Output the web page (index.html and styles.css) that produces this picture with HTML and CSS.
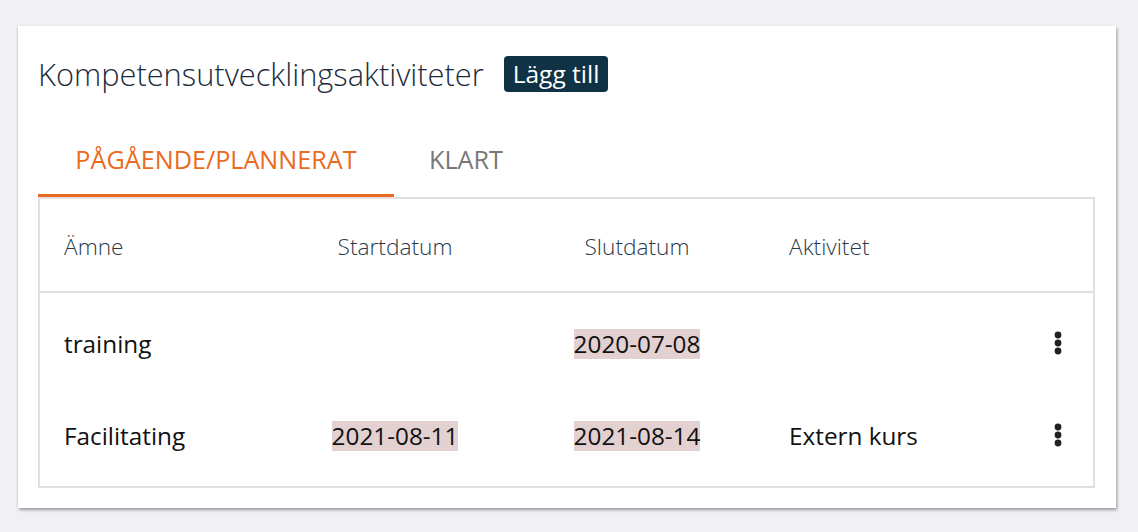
FILE: index.html
```html
<!DOCTYPE html>
<html lang="sv">
<head>
<meta charset="utf-8">
<title>Kompetensutvecklingsaktiviteter</title>
<link rel="stylesheet" href="styles.css">
</head>
<body>
<section class="card">
  <header class="card-head">
    <h2 class="title">Kompetensutvecklingsaktiviteter</h2>
    <button class="btn-add">Lägg till</button>
  </header>
  <nav class="tabs">
    <div class="tab active">PÅGÅENDE/PLANNERAT</div>
    <div class="tab">KLART</div>
  </nav>
  <div class="table">
    <div class="row head">
      <div class="cell c-subject">Ämne</div>
      <div class="cell c-start">Startdatum</div>
      <div class="cell c-end">Slutdatum</div>
      <div class="cell c-act">Aktivitet</div>
      <div class="cell c-menu"></div>
    </div>
    <div class="body">
      <div class="row">
        <div class="cell c-subject">training</div>
        <div class="cell c-start"></div>
        <div class="cell c-end"><span class="date">2020-07-08</span></div>
        <div class="cell c-act"></div>
        <div class="cell c-menu"><svg class="kebab" viewBox="0 0 8 24" width="8" height="24"><circle cx="4" cy="4" r="3.4"/><circle cx="4" cy="12" r="3.4"/><circle cx="4" cy="20" r="3.4"/></svg></div>
      </div>
      <div class="row">
        <div class="cell c-subject">Facilitating</div>
        <div class="cell c-start"><span class="date">2021-08-11</span></div>
        <div class="cell c-end"><span class="date">2021-08-14</span></div>
        <div class="cell c-act">Extern kurs</div>
        <div class="cell c-menu"><svg class="kebab" viewBox="0 0 8 24" width="8" height="24"><circle cx="4" cy="4" r="3.4"/><circle cx="4" cy="12" r="3.4"/><circle cx="4" cy="20" r="3.4"/></svg></div>
      </div>
    </div>
  </div>
</section>
</body>
</html>
```

FILE: styles.css
```css
* { box-sizing: border-box; }
html, body { margin: 0; padding: 0; }
body {
  background: #f0f0f5;
  font-family: "Open Sans", "Noto Sans", sans-serif;
  font-weight: 300;
  padding: 26px 22px 24px 18px;
}
.card {
  width: 1098px;
  height: 482px;
  background: #fff;
  box-shadow: 1px 2px 3px rgba(0,0,0,0.35), -1px 0 2px rgba(0,0,0,0.06);
  padding: 30px 21px 21px 20px;
}
.card-head {
  display: flex;
  align-items: center;
  gap: 20px;
  height: 36px;
}
.title {
  margin: 0;
  font-weight: 300;
  font-size: 30.8px;
  color: #1c2c3c;
}
.btn-add {
  height: 36px;
  padding: 0 9px;
  border: 0;
  border-radius: 4px;
  background: #0f3245;
  color: #fff;
  font-family: inherit;
  font-weight: 400;
  font-size: 24.5px;
  line-height: 36px;
}
.tabs {
  display: flex;
  margin-top: 33px;
  height: 72px;
}
.tab {
  display: flex;
  align-items: center;
  justify-content: center;
  padding: 0 0 2px;
  font-size: 25.2px;
  font-weight: 400;
  color: #777;
  border-bottom: 3px solid transparent;
}
.tab.active {
  color: #ea6a20;
  border-bottom-color: #ea6a20;
  width: 356px;
}
.tab:not(.active) { width: 144px; }
.table {
  border: 2px solid #e0e0e0;
  height: 291px;
}
.row {
  display: grid;
  grid-template-columns: 265px 180px 304px 1fr 70px;
  align-items: center;
  height: 92px;
}
.row.head {
  height: 94px;
  padding-top: 2px;
  border-bottom: 2px solid #e0e0e0;
  font-size: 22.7px;
  color: #2a3a4a;
}
.body {
  padding-top: 4px;
  font-size: 24.3px;
  font-weight: 400;
  color: #111;
}
.c-subject { padding-left: 24px; }
.c-start, .c-end, .c-menu { text-align: center; }
.c-act { text-align: left; }
.date {
  background: #e3d0d0;
  display: inline-block;
  line-height: 30px;
}
.kebab { fill: #222; display: block; margin: 0 auto; }
```
